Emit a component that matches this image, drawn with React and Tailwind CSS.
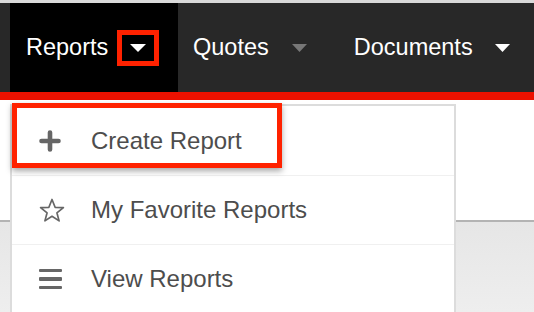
import React from 'react';

const Caret = ({ color = '#fff', w = 16, h = 8 }) => (
    <svg width={w} height={h} viewBox={`0 0 ${w} ${h}`}>
        <polygon points={`0,0 ${w},0 ${w / 2},${h}`} fill={color} />
    </svg>
);

const PlusIcon = () => (
    <svg width="22" height="22" viewBox="0 0 22 22">
        <path d="M11 2.5v17M2.5 11h17" stroke="#666" strokeWidth="4.6" strokeLinecap="round" />
    </svg>
);

const StarIcon = () => (
    <svg width="26" height="25" viewBox="0 0 26 25">
        <polygon
            points="13,1.5 16.1,9.3 24.4,9.6 17.9,14.8 20.1,22.9 13,18.3 5.9,22.9 8.1,14.8 1.6,9.6 9.9,9.3"
            fill="none"
            stroke="#666"
            strokeWidth="1.7"
            strokeLinejoin="round"
        />
    </svg>
);

const ListIcon = () => (
    <div className="flex flex-col gap-[5px] w-[23px]">
        <div className="h-[3.5px] bg-[#666] rounded-[1px]" />
        <div className="h-[3.5px] bg-[#666] rounded-[1px]" />
        <div className="h-[3.5px] bg-[#666] rounded-[1px]" />
    </div>
);

const MenuRow = ({ icon, label, border }) => (
    <div className={`flex items-center h-[69px] pl-[27px] ${border ? 'border-t border-[#f0f0f0]' : ''}`}>
        <div className="w-[52px] flex items-center">{icon}</div>
        <span className="text-[24px] text-[#4d4d4d]">{label}</span>
    </div>
);

const App = () => {
    return (
        <div className="relative w-[534px] h-[312px] overflow-hidden bg-white font-['Liberation_Sans',Arial,sans-serif]">
            <div className="h-[3px] bg-[#d9d9d9]" />

            {/* top nav */}
            <nav className="h-[89px] bg-[#282828] flex pl-[10px] text-white text-[23.5px]">
                <div className="bg-black w-[168px] flex items-center pl-[16px]">
                    <span>Reports</span>
                    <div className="ml-[9px] w-[42px] h-[36px] border-[5px] border-[#ff2200] flex items-center justify-center">
                        <Caret />
                    </div>
                </div>
                <div className="flex items-center pl-[15px]">
                    <span>Quotes</span>
                    <div className="ml-[23px]">
                        <Caret color="#777" w={15} />
                    </div>
                </div>
                <div className="flex items-center pl-[47px]">
                    <span>Documents</span>
                    <div className="ml-[22px]">
                        <Caret w={15} />
                    </div>
                </div>
            </nav>
            <div className="h-[8px] bg-[#ec1100]" />

            {/* page behind */}
            <div className="h-[120px] bg-white" />
            <div className="h-[2px] bg-[#b3b3b3]" />
            <div className="h-[90px] bg-gradient-to-b from-[#e6e6e6] to-[#eeeeee]" />

            {/* dropdown menu */}
            <div className="absolute left-[10px] top-[104px] w-[446px] h-[220px] bg-white border-2 border-[#dcdcdc]">
                <MenuRow icon={<PlusIcon />} label="Create Report" />
                <MenuRow icon={<StarIcon />} label="My Favorite Reports" border />
                <MenuRow icon={<ListIcon />} label="View Reports" border />
            </div>

            {/* highlight box */}
            <div className="absolute left-[12px] top-[103px] w-[270px] h-[65px] border-[5px] border-[#ff2200] shadow-[0_3px_6px_rgba(0,0,0,0.35)]" />
        </div>
    );
};

export default App;
